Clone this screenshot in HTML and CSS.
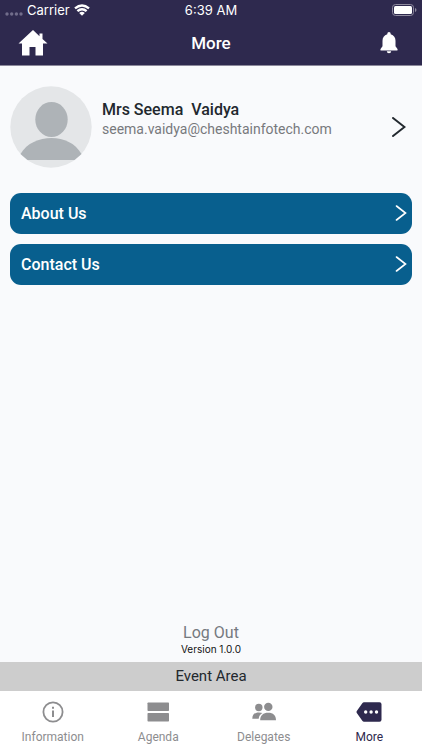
FILE: index.html
```html
<!DOCTYPE html>
<html lang="en">
<head>
<meta charset="utf-8">
<meta name="viewport" content="width=device-width, initial-scale=1">
<title>More</title>
<link rel="stylesheet" href="styles.css">
</head>
<body>
<header class="top">
  <div class="status">
    <div class="carrier">
      <svg width="18" height="4" viewBox="0 0 18 4" fill="#716d8b" aria-hidden="true"><circle cx="2" cy="2" r="1.7"/><circle cx="6.7" cy="2" r="1.7"/><circle cx="11.4" cy="2" r="1.7"/><circle cx="16" cy="2" r="1.7"/></svg>
      <span>Carrier</span>
      <svg width="16" height="12" viewBox="0 0 16 12" fill="none" stroke="#fff" stroke-width="2.4" aria-hidden="true"><path d="M1 4.300Q8-1.500 15 4.300M3.400 7.200Q8 3.300 12.600 7.200"/><path d="M5.200 8.900Q8 6.800 10.800 8.900L8 11.700Z" fill="#fff" stroke="none"/></svg>
    </div>
    <time>6:39 AM</time>
    <svg class="battery" width="25" height="12" viewBox="0 0 25 12" aria-hidden="true"><rect x=".5" y=".5" width="21" height="11" rx="3" fill="none" stroke="#8e8a9e"/><rect x="2" y="2" width="18" height="8" rx="1.5" fill="#fff"/><path d="M23 4q1.5.6 1.5 2T23 8z" fill="#8e8a9e"/></svg>
  </div>
  <div class="nav">
    <button class="icon" type="button" aria-label="Home"><svg width="30" height="26" viewBox="0 0 30 26" fill="#fff"><path d="M15 0L.5 13.500H4v12h7.500V17h6v8.500H25v-12h4.500L24.500 9V3.500h-3v2.700z"/></svg></button>
    <h1>More</h1>
    <button class="icon end" type="button" aria-label="Notifications"><svg width="18" height="22" viewBox="0 0 18 22" fill="#fff"><path d="M9 0a1.700 1.700 0 0 0-1.700 1.700v.5C4.100 3 2.500 5.700 2.500 8.700v5.600L.5 17Q0 18.500 1 18.500h16q1 0 .5-1.500l-2-2.700V8.700c0-3-1.600-5.700-4.800-6.500v-.5A1.700 1.700 0 0 0 9 0zM6.800 19.300a2.200 2 0 0 0 4.400 0z"/></svg></button>
  </div>
</header>
<main>
  <a class="profile" href="#profile">
    <svg class="avatar" width="82" height="82" viewBox="0 0 82 82" aria-hidden="true"><circle cx="41" cy="41" r="40.700" fill="#e4e6e8"/><ellipse cx="41.500" cy="33.500" rx="16.200" ry="17.500" fill="#aeb3b7"/><path d="M10.500 68C17 57 29 52 41.500 52S65 57 71.500 68L64.500 74H17.500z" fill="#aeb3b7"/></svg>
    <span class="who"><strong>Mrs Seema  Vaidya</strong><span>seema.vaidya@cheshtainfotech.com</span></span>
    <svg width="14" height="20" viewBox="0 0 14 20" fill="none" stroke="#22282e" stroke-width="2" stroke-linecap="round" aria-hidden="true"><path d="M1 1l11.500 9L1 19"/></svg>
  </a>
  <nav class="links">
    <a href="#about">About Us<svg width="12" height="16" viewBox="0 0 12 16" aria-hidden="true"><path d="M1.500 1l9 7-9 7"/></svg></a>
    <a href="#contact">Contact Us<svg width="12" height="16" viewBox="0 0 12 16" aria-hidden="true"><path d="M1.500 1l9 7-9 7"/></svg></a>
  </nav>
  <div class="session">
    <button type="button">Log Out</button>
    <small>Version 1.0.0</small>
  </div>
</main>
<footer>
  <div class="area">Event Area</div>
  <nav class="tabs">
    <a href="#information"><svg width="26" height="24" viewBox="0 0 26 24" aria-hidden="true"><circle cx="13" cy="12" r="9.600" fill="none" stroke="currentColor" stroke-width="1.800"/><path d="M12 6.800h2v2h-2zM12 10.500h2v6.500h-2z" fill="currentColor"/></svg>Information</a>
    <a href="#agenda"><svg width="26" height="24" viewBox="0 0 26 24" fill="currentColor" aria-hidden="true"><rect x="2.500" y="2.500" width="21.500" height="8.500" rx=".7"/><rect x="2.500" y="13" width="21.500" height="8.500" rx=".7"/></svg>Agenda</a>
    <a href="#delegates"><svg width="26" height="24" viewBox="0 0 26 24" fill="currentColor" aria-hidden="true"><circle cx="7.800" cy="7.500" r="3.700"/><circle cx="17.300" cy="6.900" r="4.200"/><path d="M9.200 20.300c0-5 3-7.600 8-7.600s7.800 2.600 7.800 7.600zM1.300 18.700c0-4.300 2.500-6.300 6.500-6.300 1.400 0 2.700.2 3.700.6-2.200 1.200-3.500 3-3.800 5.700z"/></svg>Delegates</a>
    <a class="active" href="#more" aria-current="page"><svg width="26" height="24" viewBox="0 0 26 24" fill="currentColor" aria-hidden="true"><path d="M8 2.200h15.500q2 0 2 2v15.600q0 2-2 2H8q-1 0-1.700-1L.8 13q-.7-1 0-2l5.500-7.800q.7-1 1.700-1z"/><g fill="#fff"><circle cx="9.700" cy="12" r="1.700"/><circle cx="15.100" cy="12" r="1.700"/><circle cx="20.500" cy="12" r="1.700"/></g></svg>More</a>
  </nav>
</footer>
</body>
</html>
```
FILE: styles.css
```css
* { box-sizing: border-box; }
body {
  margin: 0;
  min-height: 100vh;
  display: flex;
  flex-direction: column;
  background: #f9fafc;
  color: #22282e;
  font-family: Roboto, sans-serif;
}
a { color: inherit; text-decoration: none; }
button { border: 0; padding: 0; background: none; color: inherit; font: inherit; cursor: pointer; }
svg { display: block; flex: none; }

.top { background: #2e294e; color: #fff; border-bottom: 1px solid #8c899b; }
.status, .nav { display: grid; grid-template-columns: 1fr auto 1fr; align-items: center; }
.status { height: 20px; padding: 0 5px; font: 13px/20px Inter, sans-serif; }
.carrier { display: flex; align-items: center; gap: 4px; }
.carrier svg:first-child { margin-top: 8px; }
.battery { justify-self: end; }
.nav { height: 45px; padding: 0 18px; }
.nav h1 { margin: 0; font-size: 17px; line-height: 24px; font-weight: 500; }
.icon { justify-self: start; }
.end { justify-self: end; margin-right: 6px; }

main { flex: 1; display: flex; flex-direction: column; padding: 20px 10px 6px; }
.profile { display: flex; align-items: center; gap: 10px; padding-right: 6px; }
.who { flex: 1; display: flex; flex-direction: column; align-self: flex-start; padding-top: 14px; white-space: pre; }
.who strong { font-size: 16px; line-height: 20px; font-weight: 500; }
.who span { font-size: 14px; line-height: 18px; color: #77797c; }
.links { display: grid; gap: 10px; margin-top: 25px; }
.links a {
  display: flex;
  align-items: center;
  justify-content: space-between;
  height: 41px;
  padding: 0 5px 1px 11px;
  border-radius: 11px;
  background: #085f8e;
  color: #fff;
  font-size: 16px;
  font-weight: 500;
}
.links svg { fill: none; stroke: #fff; stroke-width: 1.6; stroke-linecap: round; }
.session { margin-top: auto; display: flex; flex-direction: column; align-items: center; }
.session button { font-size: 16px; line-height: 18px; color: #75797f; }
.session small { font: 10px/14px Inter, sans-serif; color: #111; }

.area { background: #cdcdcd; height: 29px; font-size: 15px; line-height: 29px; text-align: center; }
.tabs { display: grid; grid-template-columns: repeat(4, 1fr); height: 59px; padding-top: 9px; background: #fff; color: #8d8d8f; }
.tabs a { display: flex; flex-direction: column; align-items: center; gap: 5px; font-size: 12px; line-height: 16px; }
.tabs .active { color: #2e294e; }
```
